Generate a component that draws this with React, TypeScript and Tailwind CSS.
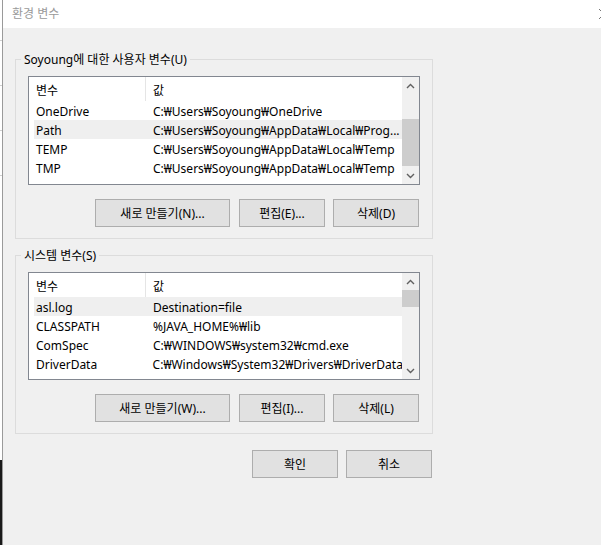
import { clsx } from 'clsx';

type Row = { name: string; value: string; selected?: boolean };

const userVars: Row[] = [
  { name: 'OneDrive', value: 'C:₩Users₩Soyoung₩OneDrive' },
  { name: 'Path', value: 'C:₩Users₩Soyoung₩AppData₩Local₩Prog...', selected: true },
  { name: 'TEMP', value: 'C:₩Users₩Soyoung₩AppData₩Local₩Temp' },
  { name: 'TMP', value: 'C:₩Users₩Soyoung₩AppData₩Local₩Temp' },
];

const systemVars: Row[] = [
  { name: 'asl.log', value: 'Destination=file', selected: true },
  { name: 'CLASSPATH', value: '%JAVA_HOME%₩lib' },
  { name: 'ComSpec', value: 'C:₩WINDOWS₩system32₩cmd.exe' },
  { name: 'DriverData', value: 'C:₩Windows₩System32₩Drivers₩DriverData' },
];

const font = 'font-["Noto_Sans","Noto_Sans_CJK_KR",sans-serif]';

const Chevron = ({ up }: { up?: boolean }) => (
  <svg width="9" height="6" viewBox="0 0 9 6" className="text-[#606060]">
    <path
      d={up ? 'M1 5 L4.5 1.5 L8 5' : 'M1 1 L4.5 4.5 L8 1'}
      fill="none"
      stroke="currentColor"
      strokeWidth="1.4"
    />
  </svg>
);

const Button = ({ label, className }: { label: string; className: string }) => (
  <button
    className={clsx(
      'h-[28px] border border-[#adadad] bg-[#e1e1e1] text-[12px] text-black leading-none pt-[1px]',
      className
    )}
  >
    {label}
  </button>
);

const VarList = ({
  rows,
  height,
  gapClass,
  thumbClass,
}: {
  rows: Row[];
  height: string;
  gapClass: string;
  thumbClass: string;
}) => (
  <div className={clsx('flex w-[392px] border border-[#828790] bg-white overflow-hidden', height)}>
    <div className="flex-1 flex flex-col overflow-hidden">
      {/* header */}
      <div className="flex h-[24px] shrink-0 items-center">
        <div className="w-[117px] pl-[7px] border-r border-[#e5e5e5] h-full flex items-center pt-[3px]">변수</div>
        <div className="pl-[7px] pt-[3px]">값</div>
      </div>
      {rows.map((r) => (
        <div
          key={r.name}
          className={clsx(
            'flex h-[19px] shrink-0 items-center ml-[5px] whitespace-nowrap pt-[3px]',
            r.selected && 'bg-[#efefef]'
          )}
        >
          <div className="w-[112px] pl-[2px]">{r.name}</div>
          <div className="pl-[7px] overflow-hidden">{r.value}</div>
        </div>
      ))}
    </div>
    {/* scrollbar */}
    <div className="w-[17px] shrink-0 bg-[#f0f0f0] flex flex-col">
      <div className="h-[17px] flex items-center justify-center">
        <Chevron up />
      </div>
      <div className={gapClass} />
      <div className={clsx('bg-[#cdcdcd]', thumbClass)} />
      <div className="flex-1" />
      <div className="h-[17px] flex items-center justify-center">
        <Chevron />
      </div>
    </div>
  </div>
);

const Group = ({
  title,
  children,
  className,
}: {
  title: string;
  children: React.ReactNode;
  className?: string;
}) => (
  <fieldset className={clsx('w-[418px] border border-[#dcdcdc] px-[12px] pt-[9px] pb-[11px]', className)}>
    <legend className="ml-[-7px] px-[3px] leading-[16px]">
      <span className="relative top-[1px]">{title}</span>
    </legend>
    {children}
  </fieldset>
);

export default function App() {
  return (
    <div className={clsx('flex w-[601px] h-[545px] overflow-hidden text-[12px] text-black', font)}>
      {/* sliver of the window behind */}
      <div className="w-[2px] flex flex-col bg-white">
        <div className="h-[460px] flex flex-col gap-[44px] pt-[40px]">
          <div className="h-px bg-[#cfcfcf]" />
          <div className="h-px bg-[#cfcfcf]" />
          <div className="h-px bg-[#cfcfcf]" />
          <div className="h-px bg-[#cfcfcf]" />
        </div>
        <div className="flex-1 bg-[#1a1a1a]" />
      </div>
      <div className="w-px bg-[#9a9a9a]" />

      <div className="flex-1 flex flex-col bg-[#f0f0f0]">
        <div className="h-[28px] shrink-0 bg-white flex items-center justify-between pl-[9px]">
          <span className="text-[#9a9a9a] text-[12px]">환경 변수</span>
          <svg width="10" height="10" viewBox="0 0 10 10" className="mr-[-8px] text-[#777]">
            <path d="M0 0 L10 10 M10 0 L0 10" stroke="currentColor" strokeWidth="1" />
          </svg>
        </div>

        <div className="pl-[12px] pt-[23px] flex flex-col">
          <Group title="Soyoung에 대한 사용자 변수(U)">
            <VarList rows={userVars} height="h-[109px]" gapClass="h-[25px]" thumbClass="h-[47px]" />
            <div className="flex justify-end gap-[8px] mt-[14px] pr-[1px]">
              <Button label="새로 만들기(N)..." className="w-[135px] mr-[1px]" />
              <Button label="편집(E)..." className="w-[86px]" />
              <Button label="삭제(D)" className="w-[86px]" />
            </div>
          </Group>

          <Group title="시스템 변수(S)" className="mt-[8px]">
            <VarList rows={systemVars} height="h-[108px]" gapClass="h-0" thumbClass="h-[17px]" />
            <div className="flex justify-end gap-[8px] mt-[14px] pr-[1px]">
              <Button label="새로 만들기(W)..." className="w-[135px] mr-[1px]" />
              <Button label="편집(I)..." className="w-[86px]" />
              <Button label="삭제(L)" className="w-[86px]" />
            </div>
          </Group>

          <div className="w-[418px] flex justify-end gap-[8px] mt-[16px] pr-[1px]">
            <Button label="확인" className="w-[86px]" />
            <Button label="취소" className="w-[86px]" />
          </div>
        </div>
      </div>
    </div>
  );
}
